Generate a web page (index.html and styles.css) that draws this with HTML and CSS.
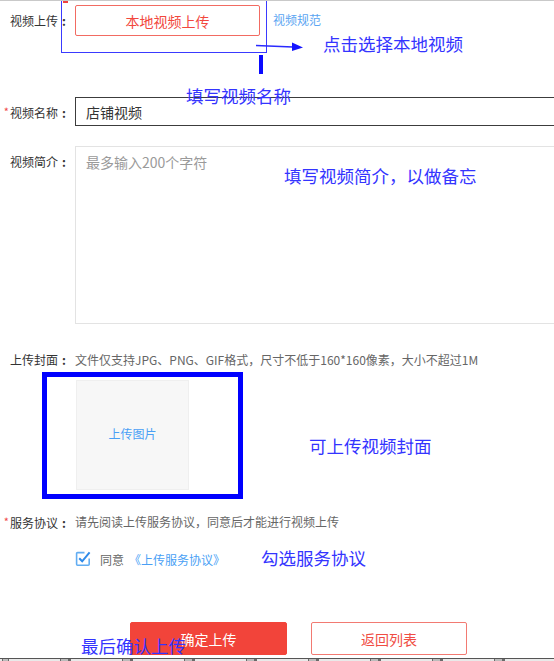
FILE: index.html
```html
<!DOCTYPE html>
<html lang="zh-CN">
<head>
<meta charset="utf-8">
<title>上传视频</title>
<link rel="stylesheet" href="styles.css">
</head>
<body>
<div class="page">
  <form class="form">
    <div class="row row-upload">
      <span class="label">视频上传<span class="colon">:</span></span>
      <button type="button" class="btn-local">本地视频上传</button>
      <a class="spec-link">视频规范</a>
    </div>

    <div class="row row-name">
      <span class="label"><i class="req">*</i>视频名称<span class="colon">:</span></span>
      <input class="text-input" type="text" value="店铺视频">
    </div>

    <div class="row row-intro">
      <span class="label label-top">视频简介<span class="colon">:</span></span>
      <textarea class="text-area" placeholder="最多输入200个字符"></textarea>
    </div>

    <div class="row row-cover">
      <span class="label">上传封面<span class="colon">:</span></span>
      <span class="hint">文件仅支持JPG、PNG、GIF格式，尺寸不低于160*160像素，大小不超过1M</span>
    </div>
    <div class="cover-box">上传图片</div>

    <div class="row row-agree">
      <span class="label"><i class="req">*</i>服务协议<span class="colon">:</span></span>
      <span class="hint">请先阅读上传服务协议，同意后才能进行视频上传</span>
    </div>
    <div class="check-row">
      <svg class="checkbox" width="16" height="16" viewBox="0 0 16 16" aria-hidden="true">
        <path d="M9.5 1.6H2.6a1 1 0 0 0-1 1v10.6a1 1 0 0 0 1 1h10.6a1 1 0 0 0 1-1V7.5" fill="none" stroke="#62adf2" stroke-width="1.6"/>
        <path d="M4.2 7.2l3 3.1 7.4-9" fill="none" stroke="#2f8be9" stroke-width="2"/>
      </svg>
      <span class="agree-text">同意</span>
      <a class="agree-link">《上传服务协议》</a>
    </div>

    <div class="actions">
      <button type="button" class="btn-primary">确定上传</button>
      <button type="button" class="btn-outline">返回列表</button>
    </div>
  </form>
  <div class="taskbar"></div>

  <!-- annotations -->
  <div class="anno-frame"></div>
  <div class="anno-redmark"></div>
  <svg class="anno-arrow" width="50" height="14" viewBox="0 0 50 14" aria-hidden="true">
    <path d="M1 6.5L38 8" stroke="#2a2aff" stroke-width="1.5" fill="none"/>
    <polygon points="37,3.5 48,8.5 37,12" fill="#1515ff"/>
  </svg>
  <div class="anno-bar"></div>
  <div class="anno-text t1">点击选择本地视频</div>
  <div class="anno-text t2">填写视频名称</div>
  <div class="anno-text t3">填写视频简介，以做备忘</div>
  <div class="anno-box"></div>
  <div class="anno-text t4">可上传视频封面</div>
  <div class="anno-text t5">勾选服务协议</div>
  <div class="anno-text t6">最后确认上传</div>
</div>
</body>
</html>
```

FILE: styles.css
```css
* { box-sizing: border-box; }

html, body {
  margin: 0;
  padding: 0;
  background: #fff;
}

body {
  width: 554px;
  height: 661px;
  overflow: hidden;
  font-family: "Noto Sans CJK SC", "Noto Sans", sans-serif;
  color: #333;
}

.page {
  position: relative;
  width: 554px;
  height: 661px;
  border-top: 1px solid #c9c9c9;
  overflow: hidden;
}

.form {
  margin: 0;
  display: flex;
  flex-direction: column;
}

.row {
  display: flex;
  align-items: center;
}

.label {
  flex: 0 0 75px;
  width: 75px;
  padding-right: 5px;
  text-align: right;
  font-size: 12px;
  line-height: 18px;
  color: #333;
  white-space: nowrap;
}

.colon {
  display: inline-block;
  width: 12px;
  text-align: center;
  font-weight: bold;
}

.label-top {
  align-self: flex-start;
  padding-top: 7px;
}

.req {
  font-style: normal;
  color: #f04848;
  font-size: 11px;
  vertical-align: 2px;
  margin-right: 1px;
}

.row-upload { margin-top: 4px; }

.btn-local {
  width: 185px;
  height: 31px;
  border: 1px solid #f26b62;
  border-radius: 2px;
  background: #fff;
  color: #f2473d;
  font-family: inherit;
  font-size: 14px;
  padding: 0;
}

.spec-link {
  margin-left: 13px;
  margin-top: -3px;
  font-size: 12px;
  color: #5aa5f2;
}

.row-name { margin-top: 61px; }

.text-input {
  width: 520px;
  flex: 0 0 520px;
  height: 29px;
  border: 1px solid #3c3c3c;
  border-right: none;
  padding: 0 10px;
  font-family: inherit;
  font-size: 14px;
  color: #333;
  outline: none;
  background: #fff;
}

.row-intro {
  margin-top: 20px;
  align-items: flex-start;
}

.text-area {
  width: 520px;
  flex: 0 0 520px;
  height: 178px;
  border: 1px solid #e3e3e3;
  border-right: none;
  padding: 5px 10px;
  font-family: inherit;
  font-size: 14px;
  line-height: 20px;
  resize: none;
  outline: none;
  background: #fff;
}

.text-area::placeholder { color: #9a9a9a; }

.row-cover { margin-top: 27px; }

.hint {
  font-size: 12px;
  line-height: 18px;
  color: #666;
  white-space: nowrap;
}

.cover-box {
  margin-top: 11px;
  margin-left: 76px;
  width: 113px;
  height: 110px;
  background: #f7f7f7;
  border: 1px solid #efefef;
  display: flex;
  align-items: center;
  justify-content: center;
  font-size: 12px;
  color: #4a9ff5;
  padding-bottom: 3px;
}

.row-agree { margin-top: 22px; }

.check-row {
  margin-top: 17px;
  margin-left: 75px;
  height: 20px;
  display: flex;
  align-items: center;
}

.checkbox { flex: 0 0 16px; }

.agree-text {
  margin-left: 9px;
  font-size: 12px;
  color: #666;
}

.agree-link {
  margin-left: 5px;
  font-size: 12px;
  color: #4a9ff5;
}

.actions {
  margin-top: 53px;
  margin-left: 130px;
  display: flex;
  gap: 24px;
}

.btn-primary,
.btn-outline {
  height: 33px;
  border-radius: 2px;
  font-family: inherit;
  font-size: 14px;
  padding: 0;
}

.btn-primary {
  width: 157px;
  background: #f2443a;
  border: 1px solid #f2443a;
  color: #fff;
}

.btn-outline {
  width: 156px;
  background: #fff;
  border: 1px solid #f27a72;
  color: #f04d44;
}

.taskbar {
  margin-top: 3px;
  height: 6px;
  border-top: 1px solid #555;
  background: repeating-linear-gradient(90deg,
    #6a6a6a 0, #6a6a6a 1px,
    #e9e9e9 1px, #e9e9e9 52px,
    #6a6a6a 52px, #6a6a6a 53px,
    #bcbcbc 53px, #bcbcbc 60px,
    #6a6a6a 60px, #6a6a6a 62px);
  background-position: 8px 0;
}

/* ---- annotations overlay ---- */
.anno-frame {
  position: absolute;
  left: 61px;
  top: -12px;
  width: 206px;
  height: 64px;
  border: 1px solid #3a3aff;
}

.anno-redmark {
  position: absolute;
  left: 63px;
  top: 0;
  width: 5px;
  height: 2px;
  background: #f04040;
}

.anno-arrow {
  position: absolute;
  left: 255px;
  top: 38px;
}

.anno-bar {
  position: absolute;
  left: 259px;
  top: 54px;
  width: 4px;
  height: 19px;
  background: #0a0aff;
}

.anno-box {
  position: absolute;
  left: 42px;
  top: 371px;
  width: 201px;
  height: 127px;
  border: 5px solid #0000ff;
}

.anno-text {
  position: absolute;
  font-size: 17.5px;
  line-height: 20px;
  color: #3434ff;
  white-space: nowrap;
}

.t1 { left: 323px; top: 33px; }
.t2 { left: 186px; top: 85px; }
.t3 { left: 284px; top: 165px; }
.t4 { left: 309px; top: 435px; }
.t5 { left: 261px; top: 547px; }
.t6 { left: 81px; top: 635px; }
```
